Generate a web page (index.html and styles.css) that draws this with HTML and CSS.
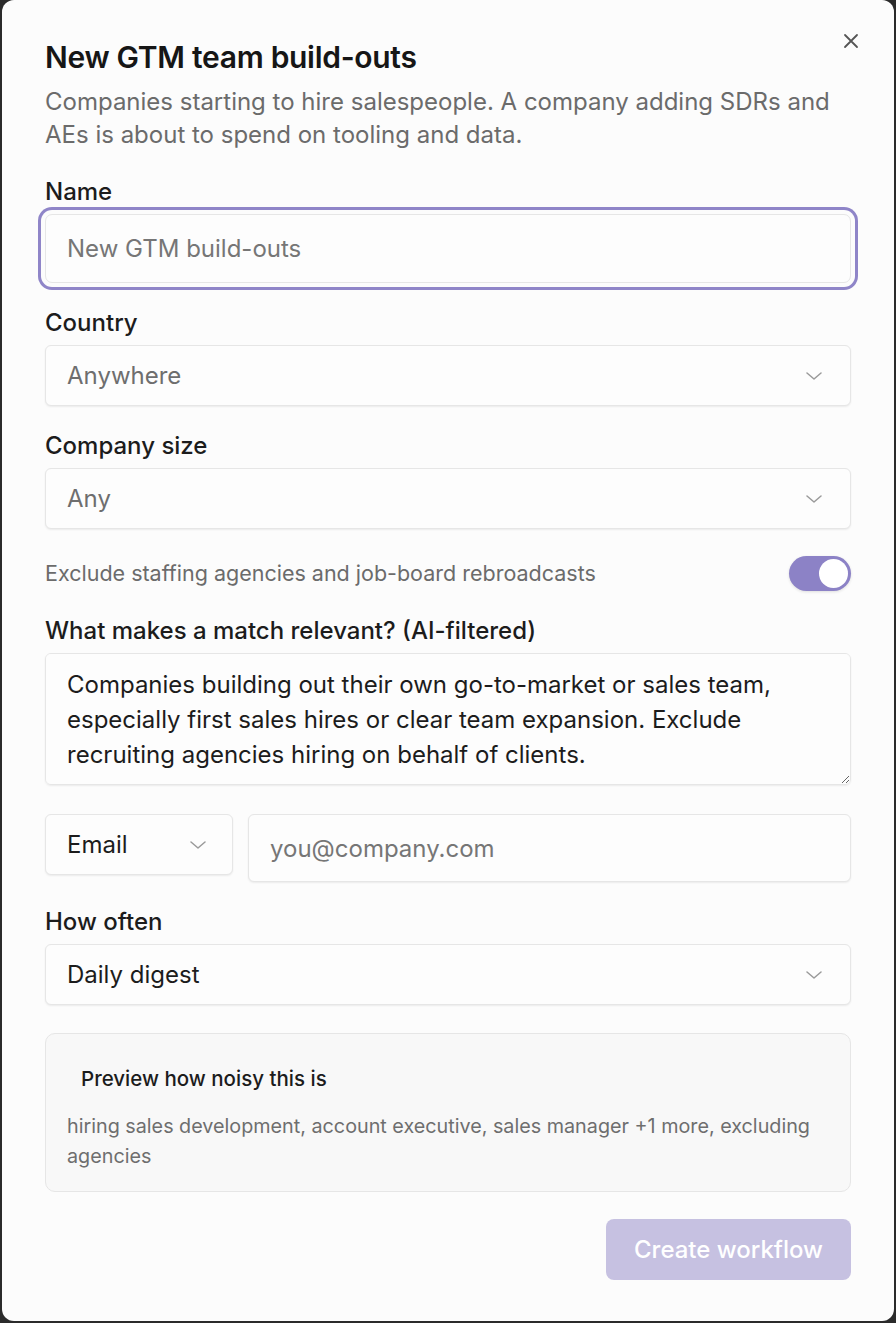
FILE: index.html
```html
<!DOCTYPE html>
<html lang="en">
<head>
<meta charset="utf-8">
<title>New GTM team build-outs</title>
<link rel="stylesheet" href="styles.css">
</head>
<body>
<div class="dialog">
  <button class="close" aria-label="Close">
    <svg width="16" height="16" viewBox="0 0 16 16"><path d="M2 2 L14 14 M14 2 L2 14" stroke="#555" stroke-width="1.8" stroke-linecap="round" fill="none"/></svg>
  </button>
  <header class="head">
    <h1 class="title">New GTM team build-outs</h1>
    <p class="subtitle">Companies starting to hire salespeople. A company adding SDRs and AEs is about to spend on tooling and data.</p>
  </header>

  <div class="field">
    <label class="label">Name</label>
    <div class="input input-focus"><span class="placeholder">New GTM build-outs</span></div>
  </div>

  <div class="field">
    <label class="label">Country</label>
    <div class="select"><span class="muted">Anywhere</span><svg class="chev" width="16" height="8" viewBox="0 0 16 8"><path d="M1 1 L8 7 L15 1" stroke="#9a9a9a" stroke-width="1.5" fill="none" stroke-linecap="round" stroke-linejoin="round"/></svg></div>
  </div>

  <div class="field">
    <label class="label">Company size</label>
    <div class="select"><span class="muted">Any</span><svg class="chev" width="16" height="8" viewBox="0 0 16 8"><path d="M1 1 L8 7 L15 1" stroke="#9a9a9a" stroke-width="1.5" fill="none" stroke-linecap="round" stroke-linejoin="round"/></svg></div>
  </div>

  <div class="toggle-row">
    <span class="toggle-text">Exclude staffing agencies and job-board rebroadcasts</span>
    <span class="toggle"><span class="knob"></span></span>
  </div>

  <div class="field">
    <label class="label">What makes a match relevant? (AI-filtered)</label>
    <textarea class="textarea" rows="3">Companies building out their own go-to-market or sales team, especially first sales hires or clear team expansion. Exclude recruiting agencies hiring on behalf of clients.</textarea>
  </div>

  <div class="channel-row">
    <div class="select select-small"><span class="dark">Email</span><svg class="chev" width="16" height="8" viewBox="0 0 16 8"><path d="M1 1 L8 7 L15 1" stroke="#9a9a9a" stroke-width="1.5" fill="none" stroke-linecap="round" stroke-linejoin="round"/></svg></div>
    <div class="input input-grow"><span class="placeholder">you@company.com</span></div>
  </div>

  <div class="field">
    <label class="label">How often</label>
    <div class="select"><span class="dark">Daily digest</span><svg class="chev" width="16" height="8" viewBox="0 0 16 8"><path d="M1 1 L8 7 L15 1" stroke="#9a9a9a" stroke-width="1.5" fill="none" stroke-linecap="round" stroke-linejoin="round"/></svg></div>
  </div>

  <section class="preview">
    <div class="preview-title">Preview how noisy this is</div>
    <p class="preview-text">hiring sales development, account executive, sales manager +1 more, excluding agencies</p>
  </section>

  <div class="actions">
    <button class="primary">Create workflow</button>
  </div>
</div>
</body>
</html>
```
FILE: styles.css
```css
* { box-sizing: border-box; }
html, body { margin: 0; padding: 0; }
body {
  background: #2b2b2b;
  font-family: Inter, "Noto Sans", "Liberation Sans", sans-serif;
  color: #1c1c1c;
  height: 1323px;
  overflow: hidden;
}
.dialog {
  position: relative;
  margin: 0 2px 0 2px;
  height: 1321px;
  background: #fcfcfc;
  border-radius: 12px;
  padding: 39px 43px 0 43px;
  display: flex;
  flex-direction: column;
}
.close {
  position: absolute;
  top: 33px;
  right: 35px;
  width: 16px;
  height: 16px;
  padding: 0;
  border: 0;
  background: transparent;
  display: flex;
}
.head { margin-bottom: 27px; }
.title {
  margin: 0;
  font-size: 30px;
  line-height: 36px;
  font-weight: 600;
  letter-spacing: -0.3px;
  color: #161616;
}
.subtitle {
  margin: 10px 0 0 0;
  font-size: 24px;
  line-height: 33px;
  color: #6b6b6b;
}
.field {
  display: flex;
  flex-direction: column;
  gap: 8px;
  margin-bottom: 26px;
}
.label {
  font-size: 24px;
  line-height: 28px;
  font-weight: 500;
  color: #1c1c1c;
}
.input, .select, .textarea {
  background: #fdfdfd;
  border: 1px solid #e6e6e6;
  border-radius: 6px;
  box-shadow: 0 1px 2px rgba(0,0,0,0.07);
  font-size: 24px;
}
.input {
  height: 69px;
  display: flex;
  align-items: center;
  padding: 0 21px;
}
.input-focus {
  box-shadow: 0 0 0 4px #fcfcfc, 0 0 0 7px #8f85c8;
  border-radius: 7px;
}
.placeholder { color: #767676; }
.select {
  height: 61px;
  display: flex;
  align-items: center;
  justify-content: space-between;
  padding: 0 28px 0 21px;
}
.muted { color: #6e6e6e; }
.dark { color: #1c1c1c; }
.toggle-row {
  display: flex;
  align-items: center;
  justify-content: space-between;
  height: 36px;
  margin-bottom: 26px;
}
.toggle-text {
  font-size: 21.5px;
  color: #6b6b6b;
}
.toggle {
  width: 62px;
  height: 35px;
  border-radius: 18px;
  background: #8c82c6;
  display: flex;
  align-items: center;
  justify-content: flex-end;
  padding: 3px;
  box-shadow: 0 1px 3px rgba(0,0,0,0.12);
}
.knob {
  width: 29px;
  height: 29px;
  border-radius: 50%;
  background: #ffffff;
}
.textarea {
  display: block;
  width: 100%;
  height: 132px;
  padding: 13px 21px;
  font-family: inherit;
  line-height: 35px;
  color: #1c1c1c;
  resize: vertical;
  margin-bottom: 3px;
}
.channel-row {
  display: flex;
  gap: 15px;
  align-items: flex-start;
  margin-bottom: 26px;
}
.select-small {
  width: 188px;
  flex: none;
  padding-right: 26px;
}
.input-grow { flex: 1; height: 68px; }
.preview {
  background: #f8f8f8;
  border: 1px solid #e6e6e6;
  border-radius: 10px;
  padding: 31px 21px 20px 21px;
  margin-top: 2px;
  margin-bottom: 27px;
}
.preview-title {
  font-size: 20.5px;
  line-height: 28px;
  font-weight: 500;
  color: #1c1c1c;
  padding-left: 14px;
}
.preview-text {
  margin: 18px 0 0 0;
  font-size: 19.75px;
  line-height: 30px;
  color: #6e6e6e;
}
.actions {
  display: flex;
  justify-content: flex-end;
}
.primary {
  width: 245px;
  height: 61px;
  border: 0;
  border-radius: 8px;
  background: #c6c1e1;
  color: #ffffff;
  font-family: inherit;
  font-size: 24px;
  font-weight: 500;
}
```
